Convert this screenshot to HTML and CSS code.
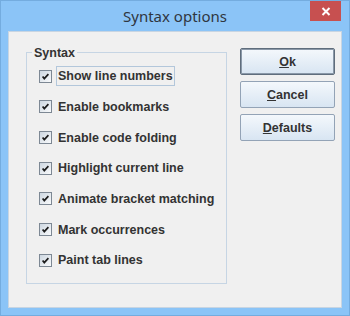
FILE: index.html
```html
<!DOCTYPE html>
<html lang="en">

<head>
    <meta charset="UTF-8">
    <title>Syntax options</title>
    <link rel="stylesheet" href="styles.css">
</head>

<body>
    <section class="window">
        <div class="titlebar">
            <span></span>
            <h1 class="titletext">Syntax options</h1>
            <button class="closebtn" aria-label="Close">
                <svg width="10" height="9" viewBox="0 0 10 9">
                    <path d="M1.5 1 L8.5 8 M8.5 1 L1.5 8" stroke="#fff" stroke-width="2" />
                </svg>
            </button>
        </div>
        <div class="client">
            <fieldset class="groupbox">
                <legend class="grouptitle">Syntax</legend>
                <div class="option">
                    <svg class="checkbox" width="13" height="13" viewBox="0 0 13 13"><use href="#cb" /></svg>
                    <span class="optlabel focused">Show line numbers</span>
                </div>
                <div class="option">
                    <svg class="checkbox" width="13" height="13" viewBox="0 0 13 13"><use href="#cb" /></svg>
                    <span class="optlabel">Enable bookmarks</span>
                </div>
                <div class="option">
                    <svg class="checkbox" width="13" height="13" viewBox="0 0 13 13"><use href="#cb" /></svg>
                    <span class="optlabel">Enable code folding</span>
                </div>
                <div class="option">
                    <svg class="checkbox" width="13" height="13" viewBox="0 0 13 13"><use href="#cb" /></svg>
                    <span class="optlabel">Highlight current line</span>
                </div>
                <div class="option">
                    <svg class="checkbox" width="13" height="13" viewBox="0 0 13 13"><use href="#cb" /></svg>
                    <span class="optlabel">Animate bracket matching</span>
                </div>
                <div class="option">
                    <svg class="checkbox" width="13" height="13" viewBox="0 0 13 13"><use href="#cb" /></svg>
                    <span class="optlabel">Mark occurrences</span>
                </div>
                <div class="option">
                    <svg class="checkbox" width="13" height="13" viewBox="0 0 13 13"><use href="#cb" /></svg>
                    <span class="optlabel">Paint tab lines</span>
                </div>
            </fieldset>
            <div class="buttons">
                <button class="btn default"><u>O</u>k</button>
                <button class="btn"><u>C</u>ancel</button>
                <button class="btn"><u>D</u>efaults</button>
            </div>
        </div>
    </section>

    <svg width="0" height="0" class="defs">
        <defs>
            <linearGradient id="cbfill" x1="0" y1="0" x2="1" y2="1">
                <stop offset="0" stop-color="#cbd5df" />
                <stop offset="1" stop-color="#fbfcfd" />
            </linearGradient>
            <g id="cb">
                <rect x="0.5" y="0.5" width="12" height="12" fill="url(#cbfill)" stroke="#7d8894" />
                <path d="M3.6 6.4 L5.3 8.6 L9.4 4.2" fill="none" stroke="#1c1c1c" stroke-width="1.7" />
            </g>
        </defs>
    </svg>
</body>

</html>
```

FILE: styles.css
```css
body {
    margin: 0;
    background-color: #8bc4f7;
}

.defs {
    position: absolute;
}

.window {
    display: flex;
    flex-direction: column;
    box-sizing: border-box;
    width: 350px;
    height: 316px;
    border: 1px solid #74acdf;
    background-color: #8bc4f7;
}

.titlebar {
    display: grid;
    grid-template-columns: 1fr auto 1fr;
    height: 30px;
}

.titletext {
    margin: 0;
    font-family: "Noto Sans", sans-serif;
    font-weight: normal;
    font-size: 15px;
    line-height: 30px;
    color: #2f3640;
}

.closebtn {
    justify-self: end;
    align-self: start;
    display: flex;
    align-items: center;
    justify-content: center;
    width: 31px;
    height: 20px;
    margin-right: 8px;
    padding: 0;
    border: none;
    background-color: #c75050;
}

.client {
    flex: 1;
    display: flex;
    align-items: flex-start;
    margin: 0 7px 7px;
    padding: 13px 0 0 17px;
    border: 1px solid #c8d5e2;
    background-color: #f0f0f0;
}

.groupbox {
    box-sizing: border-box;
    width: 201px;
    height: 239px;
    min-width: 0;
    margin: 0;
    padding: 1px 0 0 12px;
    border: 1px solid #c6d5e4;
}

.grouptitle,
.optlabel,
.btn {
    font-family: "Liberation Sans", Arial, sans-serif;
    font-weight: bold;
    font-size: 12.5px;
    color: #333;
}

.grouptitle {
    margin-left: -7px;
    padding: 1px 2px 0;
    line-height: 14px;
}

.option {
    display: flex;
    align-items: center;
    height: 30.67px;
}

.checkbox {
    flex: none;
    margin-right: 4px;
}

.optlabel {
    padding: 0 1px;
    line-height: 18px;
    border: 1px solid transparent;
    white-space: nowrap;
}

.optlabel.focused {
    border-color: #b3c7db;
}

.buttons {
    display: flex;
    flex-direction: column;
    gap: 6px;
    margin: 3px 0 0 13px;
}

.btn {
    width: 95px;
    height: 27px;
    padding: 0;
    border: 1px solid #93a3b6;
    border-radius: 2px;
    background: linear-gradient(#f4f8fc, #d8e5f2);
}

.btn.default {
    border-color: #5f6d7c;
    box-shadow: inset 0 0 0 1px #8a98a8;
}
```
